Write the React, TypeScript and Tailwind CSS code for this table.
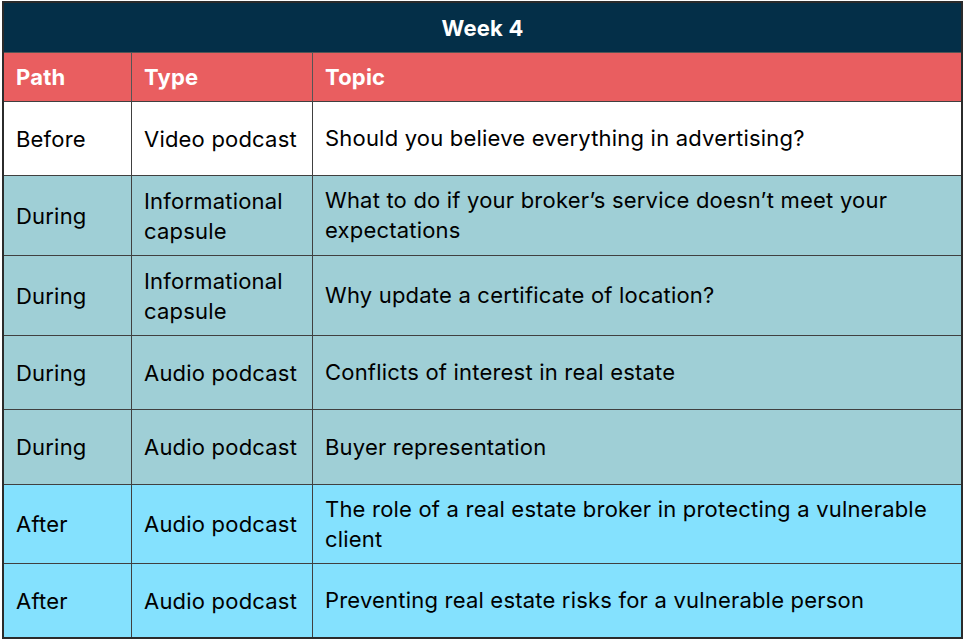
const rows = [
  { path: 'Before', type: 'Video podcast', topic: 'Should you believe everything in advertising?', bg: 'bg-white', h: 'h-[74px]' },
  { path: 'During', type: 'Informational capsule', topic: 'What to do if your broker\u2019s service doesn\u2019t meet your expectations', bg: 'bg-[#9fcfd6]', h: 'h-[80px]' },
  { path: 'During', type: 'Informational capsule', topic: 'Why update a certificate of location?', bg: 'bg-[#9fcfd6]', h: 'h-[80px]' },
  { path: 'During', type: 'Audio podcast', topic: 'Conflicts of interest in real estate', bg: 'bg-[#9fcfd6]', h: 'h-[74px]' },
  { path: 'During', type: 'Audio podcast', topic: 'Buyer representation', bg: 'bg-[#9fcfd6]', h: 'h-[75px]' },
  { path: 'After', type: 'Audio podcast', topic: 'The role of a real estate broker in protecting a vulnerable client', bg: 'bg-[#84e1fe]', h: 'h-[79px]' },
  { path: 'After', type: 'Audio podcast', topic: 'Preventing real estate risks for a vulnerable person', bg: 'bg-[#84e1fe]', h: 'h-[74px]' },
];

export default function App() {
  return (
    <div className="w-[964px] h-[640px] bg-white pt-[1px] pl-[2px]" style={{ fontFamily: 'Inter, "Noto Sans", sans-serif' }}>
      <div className="w-[961px] border-2 border-[#2b2b2b] text-[22px] leading-[30px] tracking-[0.2px] text-black">
        {/* Week title */}
        <div className="h-[49px] bg-[#042f48] flex items-center justify-center text-white font-bold">
          Week 4
        </div>

        {/* Column headers */}
        <div className="grid grid-cols-[128px_181px_1fr] h-[49px] bg-[#e95e60] text-white font-bold border-t border-[#555]">
          <div className="flex items-center pl-3 pr-2 border-r border-[#555]">Path</div>
          <div className="flex items-center pl-3 pr-2 border-r border-[#555]">Type</div>
          <div className="flex items-center pl-3 pr-2">Topic</div>
        </div>

        {rows.map((r, i) => (
          <div key={i} className={`grid grid-cols-[128px_181px_1fr] border-t border-[#404040] ${r.bg} ${r.h}`}>
            <div className="flex items-center pl-3 pr-2 border-r border-[#404040]">{r.path}</div>
            <div className="flex items-center pl-3 pr-2 border-r border-[#404040]">{r.type}</div>
            <div className="flex items-center pl-3 pr-2">
              <span className="-mt-[1px]">{r.topic}</span>
            </div>
          </div>
        ))}
      </div>
    </div>
  );
}
